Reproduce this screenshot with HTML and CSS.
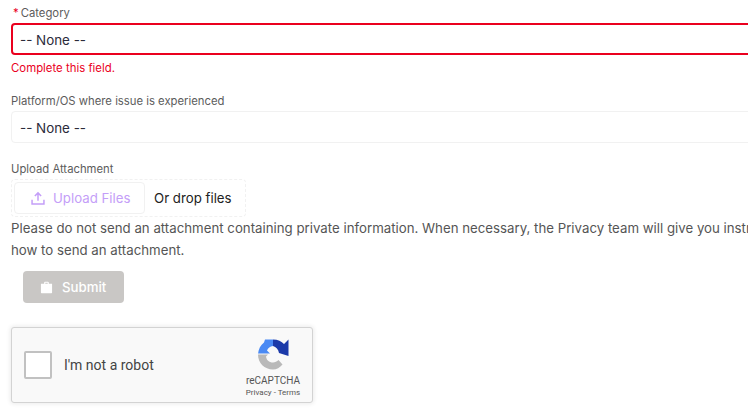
FILE: index.html
```html
<!DOCTYPE html>
<html lang="en">
<head>
    <meta charset="UTF-8">
    <title>Support Form</title>
    <link rel="stylesheet" href="styles.css">
</head>
<body>
    <form class="form">
        <!-- Category -->
        <div class="field field-category">
            <label class="label"><span class="required">*</span>Category</label>
            <div class="select select-error">-- None --</div>
            <p class="error">Complete this field.</p>
        </div>

        <!-- Platform -->
        <div class="field field-platform">
            <label class="label">Platform/OS where issue is experienced</label>
            <div class="select">-- None --</div>
        </div>

        <!-- Upload -->
        <div class="field field-upload">
            <label class="label">Upload Attachment</label>
            <div class="dropzone">
                <div class="upload-button">
                    <svg class="upload-icon" viewBox="0 0 16 16" width="14" height="14" fill="none" stroke="#c49ef8" stroke-width="1.7">
                        <path d="M8 11V2.500M4.400 5.800 8 2.200l3.600 3.600M1.200 10v4.800h13.600V10"/>
                    </svg>
                    Upload Files
                </div>
                <span class="drop-text">Or drop files</span>
            </div>
            <p class="note">Please do not send an attachment containing private information. When necessary, the Privacy team will give you instructions on how to send an attachment.</p>
        </div>

        <div class="submit">
            <svg viewBox="0 0 14 14" width="13" height="13" fill="#fff">
                <path d="M4.500 3V1.800C4.500 1.200 5 .8 5.500 .8h3c.6 0 1 .4 1 1V3H13v9.500c0 .4-.3.7-.7.7H1.700c-.4 0-.7-.3-.7-.7V3zM5.700 3h2.600V2H5.700z"/>
            </svg>
            Submit
        </div>

        <!-- reCAPTCHA -->
        <div class="captcha">
            <div class="captcha-box"></div>
            <span class="captcha-text">I'm not a robot</span>
            <div class="captcha-logo">
                <svg viewBox="0 0 38 38" width="38" height="38">
                    <path fill="#4a8af4" d="M4 18C4.500 13 6.500 9 10 6.500L11 3.500H19V10C16 10.500 14 12 13 14.500L16 17.500H4z"/>
                    <path fill="#1c3aa9" d="M19 3.500C24 3.500 27.500 5.500 30 8L34.500 3.500V20L25 17C24.500 13.500 22 11 19 10z"/>
                    <path fill="#b9b9b9" d="M4 18.500H14L12 20.500C12.500 24 15 26.500 19 26.500C21 26.500 23 25.500 24.500 24L28.500 28.500C26 31.500 22.500 33.500 19 33.500C10.500 33.500 4 27 4 18.500z"/>
                </svg>
                <span class="captcha-brand">reCAPTCHA</span>
                <span class="captcha-links">Privacy - Terms</span>
            </div>
        </div>
    </form>
</body>
</html>
```

FILE: styles.css
```css
* {
    box-sizing: border-box;
    margin: 0;
    padding: 0;
}

html, body {
    background: #fff;
    overflow: hidden;
    height: 100%;
}

body {
    font-family: Inter, 'Noto Sans', sans-serif;
}

.form {
    width: 831px;
    padding: 5px 0 0 11px;
}

.label {
    display: block;
    font-size: 11.300px;
    line-height: 16px;
    color: #5c5c5c;
}

.required {
    color: #ea001e;
    margin: 0 2px;
}

.select {
    height: 32px;
    margin-top: 2px;
    padding-left: 8px;
    border: 1px solid #f1f1f1;
    border-radius: 4px;
    font-size: 13.400px;
    line-height: 32px;
    color: #2b2b3a;
}

.select-error {
    border: 2px solid #ea001e;
    line-height: 30px;
    padding-left: 7px;
}

.error {
    margin-top: 5px;
    font-size: 11.400px;
    line-height: 16px;
    color: #ea001e;
}

.field-platform {
    margin-top: 17px;
}

.field-upload {
    margin-top: 18px;
}

.dropzone {
    display: flex;
    align-items: center;
    width: 235px;
    height: 38px;
    margin-top: 2px;
    padding-left: 2px;
    border: 1px dashed #f1f1f1;
    border-radius: 4px;
}

.upload-button {
    display: flex;
    align-items: center;
    gap: 8px;
    width: 131px;
    height: 32px;
    padding-left: 16px;
    border: 1px solid #f1f1f1;
    border-radius: 4px;
    font-size: 13.250px;
    color: #c49ef8;
}

.drop-text {
    margin-left: 9px;
    font-size: 13.250px;
    color: #222;
}

.note {
    font-size: 13.250px;
    line-height: 22px;
    color: #555;
}

.submit {
    display: flex;
    align-items: center;
    gap: 9px;
    width: 101px;
    height: 32px;
    margin: 10px 0 0 12px;
    padding-left: 17px;
    background: #c9c7c5;
    border-radius: 4px;
    font-size: 13.250px;
    font-weight: 500;
    color: #fff;
}

.captcha {
    display: flex;
    align-items: center;
    width: 302px;
    height: 76px;
    margin-top: 24px;
    padding-left: 12px;
    background: #f9f9f9;
    border: 1px solid #d3d3d3;
    border-radius: 3px;
    box-shadow: 0 0 4px 1px rgba(0, 0, 0, 0.08);
    font-family: Roboto, sans-serif;
}

.captcha-box {
    width: 28px;
    height: 28px;
    background: #fff;
    border: 2px solid #c1c1c1;
    border-radius: 2px;
}

.captcha-text {
    margin-left: 12px;
    font-size: 14px;
    color: #444;
}

.captcha-logo {
    display: flex;
    flex-direction: column;
    align-items: center;
    align-self: flex-start;
    width: 64px;
    margin: 8px 7px 0 auto;
}

.captcha-brand {
    font-size: 10px;
    line-height: 13px;
    color: #555;
}

.captcha-links {
    font-size: 8px;
    line-height: 11px;
    color: #555;
}
```
